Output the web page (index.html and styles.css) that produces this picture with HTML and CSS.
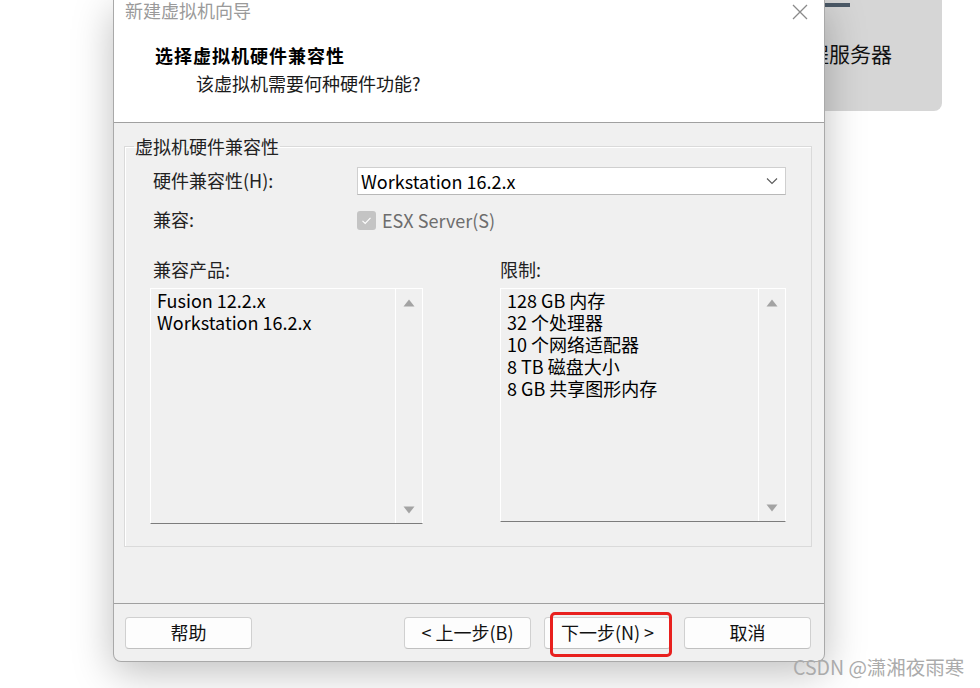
FILE: index.html
```html
<html>
  <head>
    <title>新建虚拟机向导</title>
    <link rel="stylesheet" href="styles.css">
  </head>
  <body>
    <div class="backWindow">
      <div class="backBar"></div>
      <div class="backTitle">远程服务器</div>
    </div>

    <div class="wizard">
      <div class="wizardHead">
        <div class="titleBar">
          <span class="titleText">新建虚拟机向导</span>
          <span class="closeBtn">
            <svg width="16" height="16" viewBox="0 0 16 16">
              <path d="M1 1 L15 15 M15 1 L1 15" stroke="#8a8a8a" stroke-width="1.3" fill="none" />
            </svg>
          </span>
        </div>
        <div class="stepTitle">选择虚拟机硬件兼容性</div>
        <div class="stepDesc">该虚拟机需要何种硬件功能?</div>
      </div>

      <div class="wizardBody">
        <fieldset class="groupBox">
          <legend>虚拟机硬件兼容性</legend>
          <div class="groupInner">
            <div class="formRow">
              <label class="rowLabel">硬件兼容性(H):</label>
              <div class="selectBox">
                <span>Workstation 16.2.x</span>
                <svg width="12" height="8" viewBox="0 0 12 8">
                  <path d="M1 1.5 L6 6.5 L11 1.5" stroke="#5a5a5a" stroke-width="1.1" fill="none" />
                </svg>
              </div>
            </div>
            <div class="formRow second">
              <label class="rowLabel">兼容:</label>
              <div class="checkItem">
                <span class="checkBox">
                  <svg width="19" height="19" viewBox="0 0 19 19">
                    <path d="M5.5 9.8 L8.2 12.4 L13.5 6.8" stroke="#ffffff" stroke-width="1.1" fill="none" />
                  </svg>
                </span>
                <span class="checkText">ESX Server(S)</span>
              </div>
            </div>

            <div class="listArea">
              <div class="listCol leftCol">
                <div class="listLabel">兼容产品:</div>
                <div class="listBox">
                  <div class="listItems">
                    <div>Fusion 12.2.x</div>
                    <div>Workstation 16.2.x</div>
                  </div>
                  <div class="scrollBar">
                    <svg width="12" height="8" viewBox="0 0 12 8"><path d="M6 0.5 L11.5 7.5 L0.5 7.5 Z" fill="#a3a3a3" /></svg>
                    <svg width="12" height="8" viewBox="0 0 12 8"><path d="M0.5 0.5 L11.5 0.5 L6 7.5 Z" fill="#a3a3a3" /></svg>
                  </div>
                </div>
              </div>
              <div class="listCol rightCol">
                <div class="listLabel">限制:</div>
                <div class="listBox">
                  <div class="listItems">
                    <div>128 GB 内存</div>
                    <div>32 个处理器</div>
                    <div>10 个网络适配器</div>
                    <div>8 TB 磁盘大小</div>
                    <div>8 GB 共享图形内存</div>
                  </div>
                  <div class="scrollBar">
                    <svg width="12" height="8" viewBox="0 0 12 8"><path d="M6 0.5 L11.5 7.5 L0.5 7.5 Z" fill="#a3a3a3" /></svg>
                    <svg width="12" height="8" viewBox="0 0 12 8"><path d="M0.5 0.5 L11.5 0.5 L6 7.5 Z" fill="#a3a3a3" /></svg>
                  </div>
                </div>
              </div>
            </div>
          </div>
        </fieldset>
      </div>

      <div class="wizardFoot">
        <button type="button" class="wizBtn">帮助</button>
        <div class="navBtns">
          <button type="button" class="wizBtn">&lt; 上一步(B)</button>
          <button type="button" class="wizBtn">下一步(N) &gt;</button>
          <button type="button" class="wizBtn">取消</button>
        </div>
      </div>

      <div class="highlightBox"></div>
    </div>

    <div class="watermark">CSDN @潇湘夜雨寒</div>
  </body>
</html>
```

FILE: styles.css
```css
body {
  margin: 0;
  width: 980px;
  height: 688px;
  overflow: hidden;
  position: relative;
  background-color: #ffffff;
  font-family: "Noto Sans CJK SC", sans-serif;
  font-size: 18px;
  color: #000000;
}

/* window behind the wizard */
.backWindow {
  position: absolute;
  left: 700px;
  top: -10px;
  width: 242px;
  height: 121px;
  background-color: #d6d6d6;
  border-radius: 0 0 8px 0;
}
.backBar {
  position: absolute;
  left: 124px;
  top: 13px;
  width: 26px;
  height: 4px;
  background-color: #4b5967;
}
.backTitle {
  position: absolute;
  right: 50px;
  top: 49px;
  font-size: 21px;
  line-height: 28px;
  color: #111111;
}

.wizard {
  position: absolute;
  left: 113px;
  top: 0;
  width: 712px;
  height: 662px;
  box-sizing: border-box;
  border: 1px solid #a9a9a9;
  border-top: none;
  border-radius: 0 0 8px 8px;
  background-color: #f0f0f0;
  box-shadow: 0 10px 40px rgba(0, 0, 0, 0.26);
  display: flex;
  flex-direction: column;
}

.wizardHead {
  height: 122px;
  background-color: #ffffff;
  border-bottom: 1px solid #a0a0a0;
}
.titleBar {
  height: 20px;
  display: flex;
  justify-content: space-between;
  align-items: center;
  padding: 0 16px 0 11px;
}
.titleText {
  color: #9a9a9a;
  line-height: 20px;
}
.closeBtn {
  display: flex;
  margin-top: 4px;
}
.stepTitle {
  margin-top: 23px;
  padding-left: 41px;
  line-height: 24px;
  font-weight: bold;
  letter-spacing: 1px;
}
.stepDesc {
  margin-top: 4px;
  padding-left: 82px;
  line-height: 24px;
  color: #1a1a1a;
}

.wizardBody {
  flex: 1;
  padding: 15px 12px 0 10px;
}
.groupBox {
  margin: 0;
  padding: 0 0 22px 0;
  border: 1px solid #dadada;
  box-shadow: inset 1px 1px 0 #ffffff;
  min-width: 0;
}
.groupBox legend {
  margin-left: 9px;
  padding: 0 1px;
  line-height: 16px;
  margin-bottom: 4px;
  color: #222222;
}
.groupInner {
  padding-left: 25px;
}

.formRow {
  display: flex;
  align-items: center;
  height: 28px;
  margin-top: 9px;
}
.formRow.second {
  margin-top: 11px;
}
.rowLabel {
  width: 204px;
  padding-left: 3px;
  line-height: 20px;
  padding-bottom: 2px;
  color: #222222;
}
.selectBox {
  width: 429px;
  height: 28px;
  box-sizing: border-box;
  background-color: #ffffff;
  border: 1px solid #cfcfcf;
  border-bottom-color: #b8b8b8;
  display: flex;
  align-items: center;
  justify-content: space-between;
  padding: 0 7px 1px 3px;
}
.checkItem {
  display: flex;
  align-items: center;
  gap: 6px;
}
.checkBox {
  width: 19px;
  height: 19px;
  border-radius: 3px;
  background-color: #c4c4c4;
  display: flex;
}
.checkText {
  color: #6d6d6d;
  line-height: 20px;
  padding-bottom: 1px;
}

.listArea {
  display: flex;
  gap: 77px;
  margin-top: 25px;
}
.leftCol {
  width: 273px;
}
.rightCol {
  width: 286px;
}
.listLabel {
  line-height: 20px;
  margin-bottom: 9px;
  color: #222222;
}
.leftCol .listLabel {
  padding-left: 3px;
}
.listBox {
  height: 236px;
  box-sizing: border-box;
  border: 1px solid #ffffff;
  border-bottom-color: #7c7c7c;
  display: flex;
}
.rightCol .listBox {
  height: 234px;
}
.listItems {
  flex: 1;
  padding: 0 0 0 6px;
  line-height: 22px;
}
.scrollBar {
  width: 26px;
  border-left: 1px solid #ffffff;
  display: flex;
  flex-direction: column;
  justify-content: space-between;
  align-items: center;
  padding: 10px 0 9px 0;
}

.wizardFoot {
  border-top: 1px solid #a0a0a0;
  padding: 13px 13px 12px 11px;
  display: flex;
  justify-content: space-between;
}
.navBtns {
  display: flex;
  gap: 13px;
}
.wizBtn {
  width: 127px;
  height: 32px;
  margin: 0;
  padding: 0 0 2px 0;
  background-color: #fdfdfd;
  border: 1px solid #d0d0d0;
  border-bottom-color: #c0c0c0;
  border-radius: 4px;
  font-family: "Noto Sans CJK SC", sans-serif;
  font-size: 18px;
  color: #111111;
}

/* red annotation round the next button */
.highlightBox {
  position: absolute;
  left: 436px;
  top: 612px;
  width: 122px;
  height: 45px;
  box-sizing: border-box;
  border: 3px solid #e8201e;
  border-radius: 5px;
}

.watermark {
  position: absolute;
  left: 793px;
  top: 654px;
  font-size: 19.5px;
  line-height: 26px;
  color: #ababab;
}
```
